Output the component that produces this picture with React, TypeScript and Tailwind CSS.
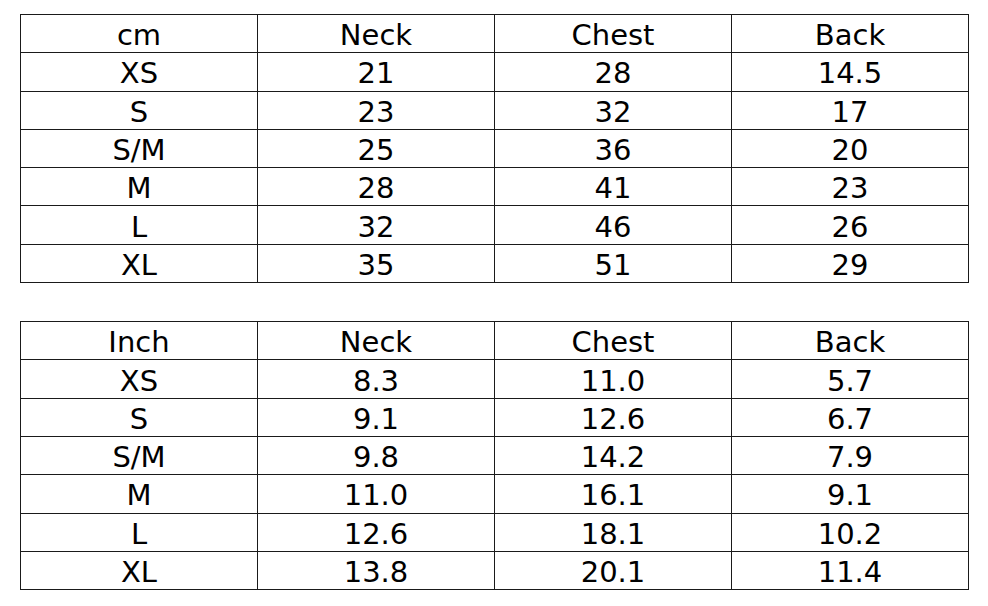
const CM = {
  unit: 'cm',
  rows: [
    ['XS', '21', '28', '14.5'],
    ['S', '23', '32', '17'],
    ['S/M', '25', '36', '20'],
    ['M', '28', '41', '23'],
    ['L', '32', '46', '26'],
    ['XL', '35', '51', '29'],
  ],
}

const INCH = {
  unit: 'Inch',
  rows: [
    ['XS', '8.3', '11.0', '5.7'],
    ['S', '9.1', '12.6', '6.7'],
    ['S/M', '9.8', '14.2', '7.9'],
    ['M', '11.0', '16.1', '9.1'],
    ['L', '12.6', '18.1', '10.2'],
    ['XL', '13.8', '20.1', '11.4'],
  ],
}

function SizeTable({ unit, rows }: { unit: string; rows: string[][] }) {
  const all = [[unit, 'Neck', 'Chest', 'Back'], ...rows]
  return (
    <table className="w-[949px] border-collapse table-fixed">
      <tbody>
        {all.map((row, i) => (
          <tr key={i} className="h-[38.3px]">
            {row.map((cell, j) => (
              <td
                key={j}
                className="border border-[#1a1a1a] text-center align-middle p-0 leading-none text-[29px] text-black"
              >
                <span className="relative top-[2px]">{cell}</span>
              </td>
            ))}
          </tr>
        ))}
      </tbody>
    </table>
  )
}

export default function App() {
  return (
    <div
      className="w-[988px] h-[606px] bg-white pt-[14px] pl-[20px] flex flex-col gap-[38px]"
      style={{ fontFamily: 'Verdana, "DejaVu Sans", sans-serif' }}
    >
      <SizeTable {...CM} />
      <SizeTable {...INCH} />
    </div>
  )
}
